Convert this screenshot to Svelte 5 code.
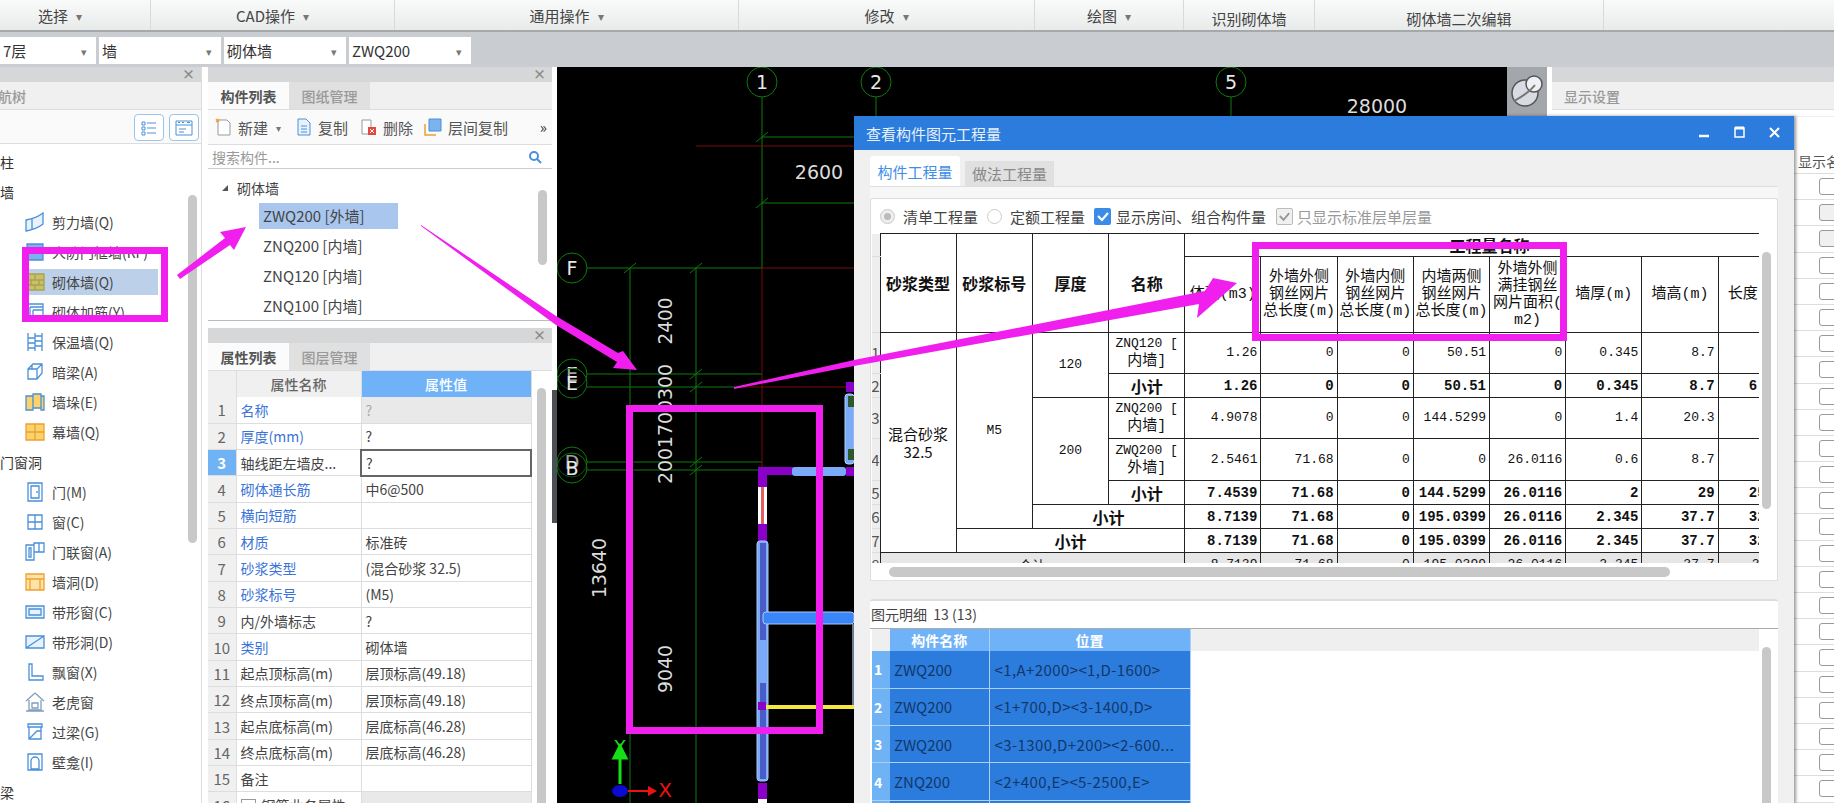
<script>
  const groups = [
    { label: '选择', w: 151, arrow: true, pad: 30 },
    { label: 'CAD操作', w: 244, arrow: true },
    { label: '通用操作', w: 344, arrow: true },
    { label: '修改', w: 296, arrow: true },
    { label: '绘图', w: 149, arrow: true },
    { label: '识别砌体墙', w: 131, low: true },
    { label: '砌体墙二次编辑', w: 289, low: true }
  ];
  const selects = [
    { label: '7层', w: 96 },
    { label: '墙', w: 122 },
    { label: '砌体墙', w: 122 },
    { label: 'ZWQ200', w: 122 }
  ];
  const blue = '#4a90d9';
  const orange = '#f0a030';
  const tree = [
    { head: '柱' },
    { head: '墙' },
    { label: '剪力墙(Q)', d: 'M1 8C7 7 13 5 18 1v11C13 16 7 18 1 19zM7 7v10', fill: '#e8f2fc', s: blue },
    { label: '人防门框墙(RF)', d: 'M2 2h16v16H2z', fill: '#7db3ec', s: blue },
    { label: '砌体墙(Q)', d: 'M1 2h18v16H1zM1 8h18M1 13h18M10 2v6M6 8v5M14 8v5M10 13v5', fill: '#c9c06b', s: '#a8a24a', on: true },
    { label: '砌体加筋(Y)', d: 'M2 2h16v16H2zM5 5h13M5 5v13M8 8h10M8 8v10', fill: 'none', s: blue },
    { label: '保温墙(Q)', d: 'M3 1v18M10 1v18M17 1v18M3 6h7M3 11h7M3 16h7M10 4h7M10 9h7M10 14h7', fill: 'none', s: blue },
    { label: '暗梁(A)', d: 'M3 7l5-5h9v9l-5 6H3zM3 7h9v10M12 7l5-5M7 3v4', fill: '#fff', s: blue },
    { label: '墙垛(E)', d: 'M1 4h7v14H1zM8 2h8v14H8zM16 4h3v14h-3z', fill: '#fbd26b', s: blue },
    { label: '幕墙(Q)', d: 'M1 2h18v16H1zM10 2v16M1 10h18', fill: '#fbd26b', s: orange },
    { head: '门窗洞' },
    { label: '门(M)', d: 'M3 1h14v18H3zM6 4h8v12H6zM12 9v2', fill: '#fff', s: blue },
    { label: '窗(C)', d: 'M3 3h14v14H3zM10 3v14M3 10h14', fill: '#fff', s: blue },
    { label: '门联窗(A)', d: 'M1 3h8v15H1zM9 1h10v9H9zM14 1v9M4 6h2v9H4z', fill: '#fff', s: blue },
    { label: '墙洞(D)', d: 'M1 2h18v16H1zM1 7h18M5 7v11M15 7v11', fill: '#fde3a6', s: orange },
    { label: '带形窗(C)', d: 'M1 4h18v12H1zM4 7h12v6H4z', fill: '#e8f2fc', s: blue },
    { label: '带形洞(D)', d: 'M1 4h18v12H1zM1 16L19 4', fill: '#e8f2fc', s: blue },
    { label: '飘窗(X)', d: 'M4 2h3v12h11v4H4z', fill: '#fff', s: blue },
    { label: '老虎窗', d: 'M10 1L1 9M10 1l9 8M4 8v10h12V8M7 11h6v5H7zM1 19h18', fill: 'none', s: '#7f9fbd' },
    { label: '过梁(G)', d: 'M3 2h14v3H3zM4 5v12h12V5M4 17l8-8h4', fill: '#fff', s: blue },
    { label: '壁龛(I)', d: 'M3 2h14v16H3zM6 17v-8a4 4 0 018 0v8z', fill: '#fff', s: blue },
    { head: '梁' }
  ];
  const parts = ['ZWQ200 [外墙]', 'ZNQ200 [内墙]', 'ZNQ120 [内墙]', 'ZNQ100 [内墙]'];
  const props = [
    ['名称', '?', 'link'], ['厚度(mm)', '?', 'link'], ['轴线距左墙皮...', '?', ''],
    ['砌体通长筋', '中6@500', 'link'], ['横向短筋', '', 'link'], ['材质', '标准砖', 'link'],
    ['砂浆类型', '(混合砂浆   32.5)', 'link'], ['砂浆标号', '(M5)', 'link'], ['内/外墙标志', '?', ''],
    ['类别', '砌体墙', 'link'], ['起点顶标高(m)', '层顶标高(49.18)', ''], ['终点顶标高(m)', '层顶标高(49.18)', ''],
    ['起点底标高(m)', '层底标高(46.28)', ''], ['终点底标高(m)', '层底标高(46.28)', ''], ['备注', '', '']
  ];
  const n1 = ['1.26', '0', '0', '50.51', '0', '0.345', '8.7', '4.2'];
  const n2 = ['1.26', '0', '0', '50.51', '0', '0.345', '8.7', '6.215'];
  const n3 = ['4.9078', '0', '0', '144.5299', '0', '1.4', '20.3', '14.6'];
  const n4 = ['2.5461', '71.68', '0', '0', '26.0116', '0.6', '8.7', '8.2'];
  const n5 = ['7.4539', '71.68', '0', '144.5299', '26.0116', '2', '29', '25.17'];
  const n6 = ['8.7139', '71.68', '0', '195.0399', '26.0116', '2.345', '37.7', '32.38'];
  const details = [
    ['ZWQ200', '<1,A+2000><1,D-1600>'],
    ['ZWQ200', '<1+700,D><3-1400,D>'],
    ['ZWQ200', '<3-1300,D+200><2-600...'],
    ['ZNQ200', '<2+400,E><5-2500,E>'],
    ['ZNQ200', '<5-2500,E><5,D>']
  ];
  const checks = Array.from({ length: 24 }, (_, i) => i);
  const ticks = [[762, 137], [762, 203], [630, 268], [696, 268], [696, 374], [696, 387], [696, 462], [696, 470]];
  const gridLines = [
    [762, 97, 762, 268], [876, 97, 876, 116], [1231, 97, 1231, 116],
    [762, 137, 854, 137], [762, 203, 854, 203], [587, 268, 762, 268],
    [630, 268, 630, 803], [696, 268, 696, 803],
    [587, 374, 762, 374], [587, 387, 735, 387], [587, 462, 762, 462], [587, 470, 762, 470]
  ];
  const redLines = [[696, 146, 854, 146], [762, 268, 854, 268], [762, 268, 762, 467], [735, 387, 854, 387]];
  const axisMarks = [
    { x: 762, y: 82, t: '1' }, { x: 876, y: 82, t: '2' }, { x: 1231, y: 82, t: '5' },
    { x: 572, y: 268, t: 'F' }, { x: 572, y: 374, t: 'E' }, { x: 572, y: 383, t: 'E' },
    { x: 572, y: 462, t: 'D' }, { x: 572, y: 468, t: 'B' }
  ];
  const dims = [
    { x: 672, y: 321, t: '2400', l: 47 }, { x: 672, y: 424, t: '2001700300', l: 120 },
    { x: 606, y: 568, t: '13640', l: 60 }, { x: 672, y: 669, t: '9040', l: 48 }
  ];
</script>

<div class="app">
  <div class="ribbon">
    {#each groups as g}
      <div class="group" class:low={g.low} style="width:{g.w}px;padding-right:{g.pad || 0}px">
        {g.label}{#if g.arrow}<span class="caret">▾</span>{/if}
      </div>
    {/each}
  </div>

  <div class="selbar">
    {#each selects as s}
      <div class="select" style="width:{s.w}px"><span>{s.label}</span><span class="caret">▾</span></div>
    {/each}
  </div>

  <div class="main">
    <aside class="left">
      <div class="pane-head"><span class="x">×</span></div>
      <div class="tabs nav-tab"><span class="nav-title">航树</span></div>
      <div class="view-tools">
        <button class="view-btn" aria-label="列表">
          <svg viewBox="0 0 20 20" width="20" height="20"><path d="M3 4h3v3H3zM3 9h3v3H3zM3 14h3v3H3zM8 5h9M8 10h9M8 15h9" fill="none" stroke="#4a90d9"/></svg>
        </button>
        <button class="view-btn" aria-label="详情">
          <svg viewBox="0 0 20 20" width="20" height="20"><path d="M2 3h16v14H2zM2 7h16M5 11h7M5 14h5" fill="none" stroke="#4a90d9"/><path d="M4 4.500h2M8 4.500h2M13 4.500h3" stroke="#4a90d9"/></svg>
        </button>
      </div>
      <div class="nav-tree">
        {#each tree as t}
          {#if t.head}
            <div class="tree-head">{t.head}</div>
          {:else}
            <div class="tree-item">
              <svg viewBox="0 0 20 20" width="20" height="20"><path d={t.d} fill={t.fill} stroke={t.s} stroke-width="1.300"/></svg>
              <span class:on={t.on}>{t.label}</span>
            </div>
          {/if}
        {/each}
        <div class="scroll nav-scroll"></div>
      </div>
    </aside>

    <section class="mid">
      <div class="parts">
        <div class="pane-head"><span class="x">×</span></div>
        <div class="tabs">
          <span class="tab on">构件列表</span>
          <span class="tab">图纸管理</span>
        </div>
        <div class="part-tools">
          <span class="tool t1">
            <svg viewBox="0 0 18 18" width="18" height="18"><path d="M3 2h9l3 3v12H3z" fill="#fff" stroke="#999"/><path d="M1 1l3 3M4 1L1 4" stroke="#f0a030" stroke-width="1.500"/></svg>
            新建<span class="caret">▾</span>
          </span>
          <span class="tool t2">
            <svg viewBox="0 0 18 18" width="18" height="18"><path d="M3 1h8l4 4v12H3zM6 8h6M6 11h6M6 14h6" fill="#e8f2fc" stroke="#4a90d9"/></svg>
            复制
          </span>
          <span class="tool t3">
            <svg viewBox="0 0 18 18" width="18" height="18"><path d="M2 2h9v14H2z" fill="#fff" stroke="#999"/><path d="M8 9h8v8H8z" fill="#e2483d"/><path d="M10 11l4 4M14 11l-4 4" stroke="#fff"/></svg>
            删除
          </span>
          <span class="tool t4">
            <svg viewBox="0 0 20 18" width="20" height="18"><path d="M2 6v11h11" fill="none" stroke="#f0a030" stroke-width="1.500"/><path d="M6 1h12v12H6z" fill="#7db3ec" stroke="#4a90d9"/></svg>
            层间复制
          </span>
          <span class="more">»</span>
        </div>
        <div class="search">
          <span>搜索构件...</span>
          <svg viewBox="0 0 14 14" width="14" height="14"><circle cx="6" cy="6" r="4" fill="none" stroke="#4a90d9" stroke-width="2"/><path d="M9 9l4 4" stroke="#4a90d9" stroke-width="2"/></svg>
        </div>
        <div class="part-tree">
          <div class="part-root"><span class="tri"></span>砌体墙</div>
          {#each parts as p, i}
            <div class="part-row"><span class:sel={i === 0}>{p}</span></div>
          {/each}
          <div class="scroll part-scroll"></div>
        </div>
      </div>

      <div class="attrs">
        <div class="pane-head"><span class="x">×</span></div>
        <div class="tabs">
          <span class="tab on">属性列表</span>
          <span class="tab">图层管理</span>
        </div>
        <table class="prop">
          <colgroup><col class="c-i"><col class="c-n"><col class="c-v"></colgroup>
          <thead>
            <tr><th></th><th>属性名称</th><th class="pv">属性值</th></tr>
          </thead>
          <tbody>
            {#each props as p, i}
              <tr class:cur={i === 2} class:dim={i === 0}>
                <td class="idx">{i + 1}</td>
                <td class:link={p[2] === 'link'}>{p[0]}</td>
                <td class="val">{p[1]}</td>
              </tr>
            {/each}
            <tr class="dim">
              <td class="idx">16</td>
              <td><span class="plus">+</span>钢筋业务属性</td>
              <td class="val"></td>
            </tr>
          </tbody>
        </table>
        <div class="scroll attr-scroll"></div>
      </div>
      <div class="edge"></div>
    </section>

    <div class="canvas">
      <svg class="cad" viewBox="557 67 950 736" width="950" height="736">
        {#each gridLines as l}
          <line x1={l[0]} y1={l[1]} x2={l[2]} y2={l[3]} stroke="#0e7a0e"/>
        {/each}
        {#each redLines as l}
          <line x1={l[0]} y1={l[1]} x2={l[2]} y2={l[3]} stroke="#7a0a0a"/>
        {/each}
        {#each ticks as t}
          <line x1={t[0] - 6} y1={t[1] + 5} x2={t[0] + 6} y2={t[1] - 5} stroke="#0e7a0e"/>
        {/each}
        {#each axisMarks as m}
          <ellipse cx={m.x} cy={m.y} rx="15" ry="15" fill="#000" fill-opacity="0.300" stroke="#0e7a0e"/>
          <text x={m.x} y={m.y + 7} text-anchor="middle" class="mark">{m.t}</text>
        {/each}
        <text x="819" y="179" text-anchor="middle" class="dim-t">2600</text>
        <text x="1377" y="113" text-anchor="middle" class="dim-t">28000</text>
        {#each dims as d}
          <text x={d.x} y={d.y} text-anchor="middle" class="dim-v" textLength={d.l} lengthAdjust="spacingAndGlyphs" transform="rotate(-90 {d.x} {d.y})">{d.t}</text>
        {/each}

        <rect x="758" y="467" width="36" height="8" fill="#8a00c8"/>
        <rect x="792" y="467" width="54" height="9" rx="3" fill="#7aaaf8"/>
        <rect x="846" y="382" width="8" height="10" fill="#8a00c8"/>
        <rect x="846" y="467" width="8" height="9" fill="#8a00c8"/>
        <rect x="845" y="394" width="9" height="70" rx="3" fill="#7aaaf8" stroke="#b8d0fa"/>
        <rect x="848" y="396" width="6" height="11" fill="#2c5a2c"/>
        <rect x="848" y="449" width="6" height="11" fill="#2c5a2c"/>
        <rect x="758" y="467" width="9" height="20" fill="#8a00c8"/>
        <rect x="758" y="487" width="9" height="37" fill="#fff"/>
        <rect x="761" y="487" width="3" height="37" fill="#e06060"/>
        <rect x="758" y="524" width="9" height="17" fill="#8a00c8"/>
        <rect x="757" y="541" width="11" height="240" rx="3" fill="#7aaaf8" stroke="#a8c6fa"/>
        <rect x="760" y="543" width="6" height="97" fill="#4a5cc8"/>
        <rect x="760" y="683" width="6" height="96" fill="#4a5cc8"/>
        <rect x="763" y="612" width="91" height="12" rx="3" fill="#3a86f8" stroke="#a8c6fa"/>
        <rect x="852" y="624" width="2" height="83" fill="#6e7f92"/>
        <rect x="765" y="705" width="89" height="4" fill="#f5e83a"/>
        <rect x="758" y="702" width="8" height="8" fill="#8a00c8"/>
        <rect x="758" y="783" width="9" height="16" fill="#8a00c8"/>
        <rect x="758" y="799" width="9" height="4" fill="#fff"/>

        <path d="M620 784v-26h-6l6-12 6 12h-6z" fill="#14e014" stroke="#14e014" stroke-width="3"/>
        <path d="M626 790h22v-4l9 5-9 5v-4h-22z" fill="#f01010"/>
        <ellipse cx="620" cy="791" rx="8" ry="6" fill="#0a0ad0"/>
        <text x="620" y="753" text-anchor="middle" class="axis-y">Y</text>
        <text x="665" y="797" text-anchor="middle" class="axis-x">X</text>
      </svg>
    </div>

    <div class="strip">
      <svg viewBox="0 0 36 36" width="36" height="36" class="globe">
        <ellipse cx="16" cy="20" rx="13" ry="13" fill="#d8dce2" stroke="#555" stroke-width="1.500"/>
        <ellipse cx="25" cy="11" rx="8" ry="8" fill="#eef0f3" stroke="#555" stroke-width="1.500"/>
        <path d="M5 28C12 24 20 20 26 12" fill="none" stroke="#777" stroke-width="2"/>
      </svg>
    </div>

    <aside class="right">
      <div class="pane-head"></div>
      <div class="tabs nav-tab"><span class="right-title">显示设置</span></div>
      <div class="sub-tab"><span></span></div>
      <div class="show-head">显示名称</div>
      {#each checks as c}
        <div class="show-row"><span class="box" class:alt={c > 0 && c < 3}></span></div>
      {/each}
    </aside>
  </div>

  <div class="dialog">
    <div class="d-title">
      <span>查看构件图元工程量</span>
      <span class="win">
        <svg viewBox="0 0 82 16" width="82" height="16">
          <path d="M0 11h10" stroke="#fff" stroke-width="2.500"/>
          <path d="M36 3h9v9h-9z" fill="none" stroke="#fff" stroke-width="1.500"/>
          <path d="M36 3h9" stroke="#fff" stroke-width="3"/>
          <path d="M71 3l9 9M80 3l-9 9" stroke="#fff" stroke-width="2"/>
        </svg>
      </span>
    </div>
    <div class="d-body">
      <div class="d-tabs">
        <span class="d-tab on">构件工程量</span>
        <span class="d-tab">做法工程量</span>
      </div>
      <div class="d-outer">
        <div class="d-panel">
          <div class="opts">
            <span class="radio sel"></span><span class="o1">清单工程量</span>
            <span class="radio"></span><span class="o2">定额工程量</span>
            <span class="chk">
              <svg viewBox="0 0 16 16" width="16" height="16"><path d="M3 8l4 4 6-7" fill="none" stroke="#fff" stroke-width="2.200"/></svg>
            </span><span class="o3">显示房间、组合构件量</span>
            <span class="chk off">
              <svg viewBox="0 0 16 16" width="16" height="16"><path d="M3 8l4 4 6-7" fill="none" stroke="#999" stroke-width="2"/></svg>
            </span><span class="o4">只显示标准层单层量</span>
          </div>
          <div class="qty-wrap">
            <table class="qty">
              <colgroup>
                <col class="q-g">
                {#each Array(12) as _}<col class="q-c">{/each}
              </colgroup>
              <tbody>
                <tr class="h1">
                  <td class="g"></td>
                  <th rowspan="2">砂浆类型</th><th rowspan="2">砂浆标号</th><th rowspan="2">厚度</th><th rowspan="2">名称</th>
                  <th colspan="8" class="top-h">工程量名称</th>
                </tr>
                <tr class="h2">
                  <td class="g"></td>
                  <td class="sub">体积(m3)</td>
                  <td class="sub">外墙外侧<br>钢丝网片<br>总长度(m)</td>
                  <td class="sub">外墙内侧<br>钢丝网片<br>总长度(m)</td>
                  <td class="sub">内墙两侧<br>钢丝网片<br>总长度(m)</td>
                  <td class="sub">外墙外侧<br>满挂钢丝<br>网片面积(<br>m2)</td>
                  <td class="sub">墙厚(m)</td>
                  <td class="sub">墙高(m)</td>
                  <td class="sub">长度(m)</td>
                </tr>
                <tr class="r41">
                  <td class="g">1</td>
                  <td rowspan="7" class="c type">混合砂浆<br>32.5</td>
                  <td rowspan="6" class="c mono">M5</td>
                  <td rowspan="2" class="c mono">120</td>
                  <td class="c name">ZNQ120 [<br><span class="cj">内墙]</span></td>
                  {#each n1 as v}<td class="n">{v}</td>{/each}
                </tr>
                <tr class="r24 b">
                  <td class="g">2</td>
                  <td class="c">小计</td>
                  {#each n2 as v}<td class="n">{v}</td>{/each}
                </tr>
                <tr class="r41">
                  <td class="g">3</td>
                  <td rowspan="3" class="c mono">200</td>
                  <td class="c name">ZNQ200 [<br><span class="cj">内墙]</span></td>
                  {#each n3 as v}<td class="n">{v}</td>{/each}
                </tr>
                <tr class="r42">
                  <td class="g">4</td>
                  <td class="c name">ZWQ200 [<br><span class="cj">外墙]</span></td>
                  {#each n4 as v}<td class="n">{v}</td>{/each}
                </tr>
                <tr class="r24 b">
                  <td class="g">5</td>
                  <td class="c">小计</td>
                  {#each n5 as v}<td class="n">{v}</td>{/each}
                </tr>
                <tr class="r24 b">
                  <td class="g">6</td>
                  <td colspan="2" class="c">小计</td>
                  {#each n6 as v}<td class="n">{v}</td>{/each}
                </tr>
                <tr class="r24 b">
                  <td class="g">7</td>
                  <td colspan="3" class="c">小计</td>
                  {#each n6 as v}<td class="n">{v}</td>{/each}
                </tr>
                <tr class="r24 total">
                  <td class="g">8</td>
                  <td colspan="4" class="c">合计</td>
                  {#each n6 as v}<td class="n">{v}</td>{/each}
                </tr>
              </tbody>
            </table>
          </div>
          <div class="scroll q-vs"></div>
          <div class="q-hs"><div class="scroll q-thumb"></div></div>
        </div>
      </div>
      <div class="d-lower">
        <div class="low-head">图元明细&nbsp;&nbsp;13 (13)</div>
        <table class="detail">
          <colgroup><col class="dt-g"><col class="dt-a"><col class="dt-b"><col></colgroup>
          <thead>
            <tr><th class="corner"></th><th>构件名称</th><th>位置</th><th class="rest"></th></tr>
          </thead>
          <tbody>
            {#each details as d, i}
              <tr>
                <td class="dg">{i + 1}</td>
                <td class="dc">{d[0]}</td>
                <td class="dc pos">{d[1]}</td>
                <td class="empty"></td>
              </tr>
            {/each}
          </tbody>
        </table>
        <div class="scroll low-scroll"></div>
      </div>
    </div>
  </div>

  <svg class="notes" viewBox="0 0 1834 803" width="1834" height="803">
    <g fill="none" stroke="#f01fee" stroke-width="7">
      <rect x="25.500" y="250.500" width="139" height="68"/>
      <rect x="629.500" y="408.500" width="190" height="322"/>
      <rect x="1255.500" y="245.500" width="308" height="92"/>
    </g>
    <g fill="#f01fee">
      <path d="M177 275L225 238 220 232 246 227 234 250 230 245 180 279z"/>
      <path d="M421 225L556 316 618 353 623 351 637 370 613 368 617 362 556 325 421 226z"/>
      <path d="M734 387L854 360 1205 291 1213 278 1237 283 1197 318 1199 304 854 366 734 389z"/>
    </g>
  </svg>
</div>

<style>
  :global(body) {
    margin: 0;
    background: #c9ccd0;
  }
  .app {
    position: relative;
    width: 1834px;
    height: 803px;
    overflow: hidden;
    font-family: "Noto Sans CJK SC", "Liberation Sans", sans-serif;
    font-size: 14px;
    color: #333;
    background: #c9ccd0;
  }
  button {
    padding: 0;
    background: none;
  }

  .ribbon {
    display: flex;
    box-sizing: border-box;
    height: 32px;
    background: linear-gradient(#f9fafa, #e9ebeb);
    border-bottom: 2px solid #a6a9ac;
  }
  .group {
    display: flex;
    align-items: center;
    justify-content: center;
    box-sizing: border-box;
    height: 30px;
    border-right: 1px solid #d8dada;
    color: #444;
    font-size: 15px;
  }
  .group.low {
    padding-top: 6px;
  }
  .caret {
    margin-left: 8px;
    color: #777;
    font-size: 12px;
  }

  .selbar {
    display: flex;
    gap: 3px;
    box-sizing: border-box;
    height: 35px;
    padding-top: 5px;
  }
  .select {
    display: flex;
    align-items: center;
    justify-content: space-between;
    box-sizing: border-box;
    height: 27px;
    padding: 0 9px 0 3px;
    background: #fff;
    color: #333;
    font-size: 15px;
  }
  .select .caret {
    margin: 0;
    font-size: 11px;
  }

  .main {
    display: flex;
    height: 736px;
    background: #fff;
  }
  .pane-head {
    position: relative;
    height: 15px;
    background: #d6d7d8;
  }
  .x {
    position: absolute;
    right: 6px;
    top: -3px;
    color: #888;
    font-size: 13px;
    font-weight: 700;
  }
  .tabs {
    display: flex;
    box-sizing: border-box;
    height: 28px;
    background: #f0f0f0;
    border-bottom: 1px solid #ddd;
  }
  .tab {
    display: flex;
    align-items: center;
    justify-content: center;
    width: 81px;
    background: #e0e0e0;
    color: #999;
    font-weight: 500;
  }
  .tab.on {
    background: #fbfbfb;
    color: #555;
    font-weight: 700;
  }
  .nav-title {
    display: block;
    margin-top: 4px;
    margin-left: -2px;
    color: #999;
    font-weight: 500;
  }
  .right-title {
    display: block;
    margin: 4px 0 0 12px;
    color: #999;
    font-weight: 500;
  }

  .left {
    flex: none;
    width: 202px;
    border-right: 1px solid #ddd;
    box-sizing: border-box;
    margin-right: 6px;
  }
  .view-tools {
    display: flex;
    justify-content: flex-end;
    gap: 5px;
    box-sizing: border-box;
    height: 34px;
    padding: 4px 2px 0 0;
    border-bottom: 1px solid #ddd;
    background: #fafafa;
  }
  .view-btn {
    display: flex;
    align-items: center;
    justify-content: center;
    box-sizing: border-box;
    width: 30px;
    height: 27px;
    border: 1px solid #9cc4ec;
    border-radius: 4px;
    background: #fff;
  }
  .nav-tree {
    position: relative;
    padding-top: 3px;
    height: 660px;
    overflow: hidden;
  }
  .tree-head {
    height: 30px;
    line-height: 30px;
    padding-left: 0;
    color: #333;
  }
  .tree-item {
    display: flex;
    align-items: center;
    gap: 7px;
    height: 30px;
    padding-left: 25px;
    color: #444;
  }
  .tree-item .on {
    display: block;
    margin-right: 0;
  }
  .tree-item:has(.on) {
    background: linear-gradient(#bcd0ea, #bcd0ea) no-repeat 28px 2px / 130px 26px;
  }
  .scroll {
    position: absolute;
    background: #c8c8c8;
    border-radius: 5px;
  }
  .nav-scroll {
    left: 188px;
    top: 51px;
    width: 9px;
    height: 348px;
  }

  .mid {
    position: relative;
    flex: none;
    width: 349px;
    box-sizing: border-box;
    padding-right: 5px;
  }
  .parts {
    height: 254px;
    border-bottom: 1px solid #bbb;
    box-sizing: border-box;
    margin-bottom: 7px;
  }
  .part-tools {
    position: relative;
    display: flex;
    align-items: center;
    box-sizing: border-box;
    height: 35px;
    padding-left: 7px;
    background: #fafafa;
    border-bottom: 1px solid #ddd;
    color: #555;
    font-size: 15px;
  }
  .tool {
    display: flex;
    align-items: center;
    gap: 5px;
  }
  .tool .caret {
    margin-left: 3px;
    font-size: 10px;
  }
  .t2 { margin-left: 14px; }
  .t3 { margin-left: 12px; }
  .t4 { margin-left: 10px; }
  .more {
    position: absolute;
    right: 5px;
    top: 6px;
    color: #333;
  }
  .search {
    display: flex;
    align-items: center;
    justify-content: space-between;
    box-sizing: border-box;
    height: 24px;
    padding: 0 10px 0 4px;
    border-bottom: 1px solid #ccc;
    color: #999;
  }
  .part-tree {
    position: relative;
    height: 151px;
    overflow: hidden;
    padding-top: 4px;
    box-sizing: border-box;
    font-size: 15px;
    color: #444;
  }
  .part-root {
    display: flex;
    align-items: center;
    height: 30px;
    padding-left: 14px;
    font-size: 14px;
  }
  .tri {
    width: 0;
    height: 0;
    margin-right: 9px;
    border-left: 6px solid transparent;
    border-bottom: 6px solid #555;
  }
  .part-row {
    height: 30px;
    line-height: 30px;
    padding-left: 51px;
  }
  .part-row span {
    display: block;
    width: 135px;
    height: 26px;
    line-height: 26px;
    padding-left: 4px;
  }
  .part-row .sel {
    background: #a9c7ee;
  }
  .part-scroll {
    left: 330px;
    top: 21px;
    width: 9px;
    height: 75px;
  }

  .attrs {
    position: relative;
    height: 475px;
    overflow: hidden;
  }
  .prop {
    width: 323px;
    border-collapse: collapse;
    table-layout: fixed;
  }
  .c-i { width: 28px; }
  .c-n { width: 125px; }
  .c-v { width: 170px; }
  .prop th {
    height: 26px;
    padding: 0;
    background: #f0f0f0;
    border-right: 1px solid #ddd;
    color: #666;
    font-weight: 500;
  }
  .prop .pv {
    background: #70b2f8;
    color: #fff;
  }
  .prop td {
    box-sizing: border-box;
    height: 26.330px;
    padding: 0 0 0 4px;
    border-bottom: 1px solid #ddd;
    border-right: 1px solid #ddd;
    white-space: nowrap;
    overflow: hidden;
    color: #444;
  }
  .prop td.idx {
    padding: 0;
    background: #f0f0f0;
    text-align: center;
    color: #666;
    font-size: 15px;
  }
  .prop td.link {
    color: #3a74d8;
  }
  .prop .cur td.idx {
    background: #6fb3f5;
    color: #fff;
    font-weight: 700;
  }
  .prop .cur td.val {
    border: 2px solid #666;
  }
  .prop .dim td.val {
    background: #e9e9e9;
    color: #aaa;
  }
  .plus {
    display: inline-block;
    width: 13px;
    height: 13px;
    margin-right: 6px;
    border: 1px solid #999;
    line-height: 12px;
    text-align: center;
    font-size: 12px;
  }
  .attr-scroll {
    left: 329px;
    top: 60px;
    width: 9px;
    height: 420px;
  }
  .edge {
    position: absolute;
    right: 0;
    top: 323px;
    width: 5px;
    height: 133px;
    background: #4c4f53;
  }

  .canvas {
    position: relative;
    flex: none;
    width: 950px;
    background: #000;
  }
  .cad {
    display: block;
  }
  .mark {
    fill: #e8e8e8;
    font-family: "DejaVu Sans", sans-serif;
    font-size: 19px;
  }
  .dim-t {
    fill: #dcdcdc;
    font-family: "DejaVu Sans", sans-serif;
    font-size: 19px;
  }
  .dim-v {
    fill: #dcdcdc;
    font-family: "DejaVu Sans", sans-serif;
    font-size: 20px;
  }
  .axis-y {
    fill: #14e014;
    font-family: "DejaVu Sans", sans-serif;
    font-size: 18px;
  }
  .axis-x {
    fill: #f01010;
    font-family: "DejaVu Sans", sans-serif;
    font-size: 20px;
  }

  .strip {
    flex: none;
    width: 40px;
    background: #a3a6aa;
    border-right: 5px solid #fff;
  }
  .globe {
    display: block;
    margin: 6px 0 0 2px;
  }

  .right {
    flex: none;
    width: 282px;
    background: #fff;
  }
  .sub-tab {
    height: 6px;
    padding-left: 5px;
    border-bottom: 1px solid #eee;
  }
  .show-head {
    box-sizing: border-box;
    height: 57px;
    padding: 33px 0 0 246px;
    line-height: 22px;
    border-bottom: 1px solid #ddd;
    color: #555;
    white-space: nowrap;
    overflow: hidden;
  }
  .show-row {
    box-sizing: border-box;
    height: 26.200px;
    padding: 4px 0 0 25px;
    margin-left: 242px;
    border-bottom: 1px solid #ddd;
  }
  .box {
    display: block;
    box-sizing: border-box;
    width: 24px;
    height: 17px;
    border: 1px solid #999;
    border-radius: 3px;
    background: #fff;
  }
  .box.alt {
    background: #f0f0f0;
  }

  .dialog {
    position: absolute;
    left: 854px;
    top: 116px;
    width: 940px;
    height: 687px;
    display: flex;
    flex-direction: column;
    background: #f0f0f0;
    box-shadow: 2px 0 3px rgba(0, 0, 0, 0.4);
  }
  .d-title {
    display: flex;
    align-items: center;
    justify-content: space-between;
    flex: none;
    height: 34px;
    padding: 0 13px 0 12px;
    background: #2b7cdd;
    color: #e8f1fb;
    font-size: 15px;
  }
  .win svg {
    display: block;
  }
  .d-body {
    position: relative;
    flex: 1;
    padding: 6px 16px 0;
  }
  .d-tabs {
    display: flex;
    gap: 5px;
    align-items: flex-end;
    height: 30px;
    font-size: 15px;
  }
  .d-tab {
    display: flex;
    align-items: center;
    justify-content: center;
    width: 89px;
    height: 25px;
    background: #e0e0e0;
    color: #888;
  }
  .d-tab.on {
    height: 30px;
    width: 90px;
    background: #fff;
    color: #3e8ee8;
    border-radius: 3px 3px 0 0;
  }
  .d-outer {
    height: 395px;
    background: #f7f7f7;
    border-top: 1px solid #ddd;
    box-sizing: border-box;
    padding-top: 11px;
    border-bottom: 2px solid #e0e0e0;
  }
  .d-panel {
    position: relative;
    box-sizing: border-box;
    height: 382px;
    background: #fff;
    border: 1px solid #ddd;
    border-bottom: 0;
    border-radius: 3px 3px 0 0;
  }
  .opts {
    display: flex;
    align-items: center;
    height: 34px;
    padding-left: 9px;
    font-size: 15px;
    color: #444;
  }
  .radio {
    box-sizing: border-box;
    width: 15px;
    height: 15px;
    border: 1px solid #ccc;
    border-radius: 50%;
    background: #fff;
  }
  .radio.sel {
    border: 4px solid #eee;
    background: #bbb;
    outline: 1px solid #ccc;
    outline-offset: -1px;
  }
  .o1 { margin: 0 9px 0 8px; }
  .o2 { margin: 0 9px 0 8px; }
  .o3 { margin: 0 10px 0 5px; }
  .o4 { margin-left: 4px; color: #999; }
  .chk {
    display: flex;
    align-items: center;
    justify-content: center;
    width: 17px;
    height: 17px;
    border-radius: 2px;
    background: #3a8ce8;
  }
  .chk.off {
    box-sizing: border-box;
    background: #f0f0f0;
    border: 1px solid #bbb;
  }
  .qty-wrap {
    width: 887px;
    height: 330px;
    overflow: hidden;
    margin-left: 1px;
    background: #eee;
  }
  .qty {
    width: 922.400px;
    table-layout: fixed;
    border-collapse: collapse;
    background: #fff;
    color: #111;
    font-family: "Liberation Mono", "Noto Sans CJK SC", monospace;
    font-size: 13px;
    line-height: 18px;
  }
  .q-g { width: 8px; }
  .q-c { width: 76.200px; }
  .qty th, .qty td {
    padding: 0;
    border: 1px solid #222;
    overflow: hidden;
  }
  .qty th {
    font-family: "Noto Sans CJK SC", sans-serif;
    font-size: 16px;
    font-weight: 700;
  }
  .qty .g {
    border: 0;
    border-bottom: 1px solid #ddd;
    background: #eee;
    color: #555;
    text-align: right;
    font-family: "Noto Sans CJK SC", sans-serif;
    font-size: 15px;
    direction: rtl;
  }
  .h1 { height: 23px; }
  .h2 { height: 76px; }
  .r41 { height: 41px; }
  .r42 { height: 42px; }
  .r24 { height: 24px; }
  .top-h {
    vertical-align: top;
    line-height: 22px;
  }
  .sub {
    text-align: center;
    font-family: "Noto Sans CJK SC", sans-serif;
    font-size: 15px;
    line-height: 17px;
    white-space: nowrap;
  }
  .qty .sub {
    font-family: "Liberation Mono", "Noto Sans CJK SC", monospace;
  }
  .qty .c {
    text-align: center;
    font-family: "Noto Sans CJK SC", sans-serif;
  }
  .qty .mono {
    font-family: "Liberation Mono", monospace;
    font-size: 13px;
  }
  .qty .type {
    font-size: 15px;
    line-height: 18px;
  }
  .qty .name {
    font-family: "Liberation Mono", "Noto Sans CJK SC", monospace;
    font-size: 13px;
    line-height: 18px;
  }
  .cj {
    font-size: 15px;
  }
  .qty .n {
    padding-right: 3px;
    text-align: right;
    white-space: nowrap;
  }
  .b td:not(.g) {
    font-size: 14px;
    font-weight: 700;
  }
  .qty .b .c {
    font-size: 16px;
    font-weight: 700;
  }
  .total td:not(.g) {
    background: #e6e6e6;
  }
  .q-vs {
    left: 891px;
    top: 53px;
    width: 9px;
    height: 257px;
  }
  .q-hs {
    position: absolute;
    left: 18px;
    right: 0;
    top: 368px;
    height: 11px;
  }
  .q-thumb {
    left: 0;
    top: 0;
    width: 781px;
    height: 10px;
  }
  .d-lower {
    position: relative;
    box-sizing: border-box;
    height: 204px;
    margin-top: 18px;
    background: #fff;
    border-top: 2px solid #ddd;
    border-radius: 3px 3px 0 0;
    overflow: hidden;
  }
  .low-head {
    box-sizing: border-box;
    height: 28px;
    padding: 1px 0 0 1px;
    line-height: 24px;
    border-bottom: 1px solid #aaa;
    font-size: 14px;
    color: #444;
  }
  .detail {
    width: 887px;
    margin-left: 2px;
    table-layout: fixed;
    border-collapse: collapse;
  }
  .dt-g { width: 18px; }
  .dt-a { width: 99px; }
  .dt-b { width: 201px; }
  .detail th {
    height: 22px;
    padding: 0;
    background: #70b2f8;
    border-right: 1px solid #a8d0fa;
    color: #fff;
    font-size: 14px;
    font-weight: 700;
  }
  .detail th.corner, .detail th.rest {
    background: #efefef;
    border: 0;
  }
  .detail td {
    height: 37.300px;
    padding: 0;
    box-sizing: border-box;
  }
  .detail .dg {
    background: #6fb3f5;
    border-bottom: 1px solid #a8d0fa;
    color: #fff;
    font-weight: 700;
    padding-left: 2px;
  }
  .detail .dc {
    padding-left: 4px;
    background: #2b7cdd;
    border-right: 1px solid #a8d0fa;
    border-bottom: 1px solid #a8d0fa;
    color: #12386a;
    font-size: 15px;
    white-space: nowrap;
    overflow: hidden;
  }
  .detail .pos {
    padding-left: 5px;
    font-size: 15px;
    letter-spacing: 0.4px;
  }
  .detail .empty {
    background: #fff;
  }
  .low-scroll {
    left: 892px;
    top: 46px;
    width: 9px;
    height: 200px;
  }

  .notes {
    position: absolute;
    left: 0;
    top: 0;
    pointer-events: none;
  }
</style>
